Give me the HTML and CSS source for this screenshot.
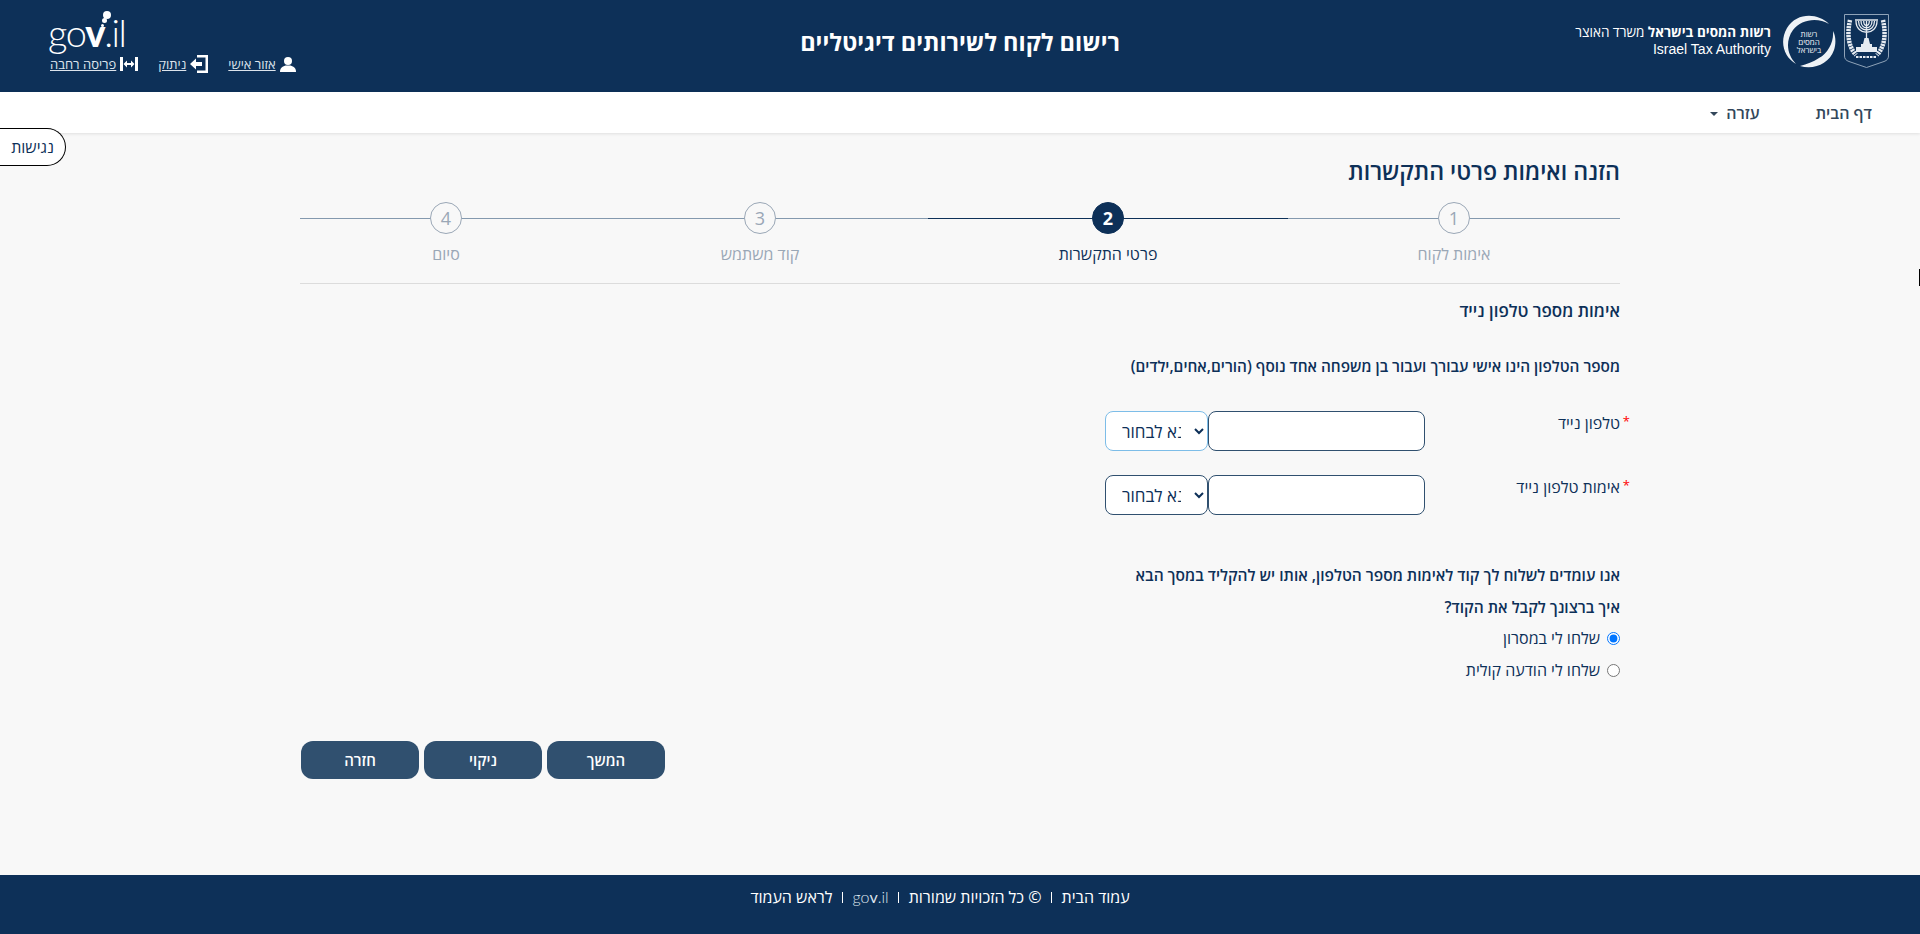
FILE: index.html
```html
<!DOCTYPE html>
<html lang="he" dir="rtl">
<head>
    <meta charset="UTF-8">
    <title>רישום לקוח לשירותים דיגיטליים</title>
    <link rel="stylesheet" href="styles.css">
</head>
<body>
    <!-- Header -->
    <header class="site-header">
        <div class="brand">
            <svg class="emblem" viewBox="0 0 45 54" fill="none" stroke="#e6ebf1">
                <path d="M.5 .5H44.500V42Q44.500 46 40 47.500L22.500 53.500L5 47.500Q.5 46 .5 42Z" stroke="#8fa3b8"/>
                <path d="M6 6C3 20 4 32 12 41" stroke-width="4.500" stroke-dasharray="2.200 .8"/>
                <path d="M39 6C42 20 41 32 33 41" stroke-width="4.500" stroke-dasharray="2.200 .8"/>
                <path d="M22.500 7V25M12 7C12 22 33 22 33 7M14.500 7C14.500 19 30.500 19 30.500 7M17 7C17 16 28 16 28 7M19.700 7C19.700 13 25.300 13 25.300 7" stroke-width="1.300"/>
                <path d="M11 6H34" stroke-width="1.500"/>
                <path d="M20.500 24H24.500L26 30H19Z" fill="#e6ebf1" stroke="none"/>
                <path d="M17 30H28V33H33V38H12V33H17Z" fill="#e6ebf1" stroke="none"/>
                <path d="M12 43H33" stroke-width="2" stroke-dasharray="2.500 1"/>
            </svg>
            <div class="tax-logo">
                <svg viewBox="0 0 54 54" fill="#eef2f6">
                    <path d="M47 10C36 -1 15 -2 5 14C-3 28 2 43 14 50C5 41 3 27 11 16C19 5 36 3 47 10Z"/>
                    <path d="M18 52C32 56 47 50 52 36C54 30 54 22 51 17C52 28 46 39 37 44C31 48 25 50 18 52Z"/>
                </svg>
                <span class="tax-logo-text">רשות<br>המסים<br>בישראל</span>
            </div>
            <div class="brand-text">
                <div><b>רשות המסים בישראל</b> משרד האוצר</div>
                <div class="brand-en" dir="ltr">Israel Tax Authority</div>
            </div>
        </div>
        <h1 class="site-title">רישום לקוח לשירותים דיגיטליים</h1>
        <div class="header-side">
            <div class="gov-logo" dir="ltr">
                <span class="gov-word">go<b>v</b></span><span class="gov-dots"><i></i><i></i><i></i></span><span class="gov-word">.il</span>
            </div>
            <div class="user-links">
                <a href="#">
                    <svg width="16" height="15" viewBox="0 0 16 15" fill="#fff"><circle cx="8" cy="4" r="4"/><path d="M0 15C0 11 2 9.500 5.500 8.500H10.500C14 9.500 16 11 16 15Z"/></svg>
                    <span>אזור אישי</span>
                </a>
                <a href="#">
                    <svg width="18" height="18" viewBox="0 0 18 18" fill="#fff"><path d="M7 0H18V18H7V15.500H15.500V2.500H7Z"/><path d="M0 9L6 3.500V7H12V11H6V14.500Z"/></svg>
                    <span>ניתוק</span>
                </a>
                <a href="#">
                    <svg width="18" height="14" viewBox="0 0 18 14" fill="#fff"><path d="M0 0H3V14H0ZM15 0H18V14H15Z"/><path d="M3.500 7L7 3.500V6H11V3.500L14.500 7L11 10.500V8H7V10.500Z"/></svg>
                    <span>פריסה רחבה</span>
                </a>
            </div>
        </div>
    </header>

    <!-- Menu -->
    <nav class="main-nav">
        <a href="#">דף הבית</a>
        <a href="#" class="has-menu">עזרה</a>
    </nav>

    <button class="access-btn" type="button">נגישות</button>
    <span class="caret-mark"></span>

    <main class="content">
        <h2 class="page-title">הזנה ואימות פרטי התקשרות</h2>

        <!-- Steps -->
        <ol class="steps">
            <li class="step"><span class="step-num">1</span><span class="step-label">אימות לקוח</span></li>
            <li class="step active"><span class="step-num">2</span><span class="step-label">פרטי התקשרות</span></li>
            <li class="step"><span class="step-num">3</span><span class="step-label">קוד משתמש</span></li>
            <li class="step"><span class="step-num">4</span><span class="step-label">סיום</span></li>
        </ol>

        <h3 class="section-title">אימות מספר טלפון נייד</h3>
        <p class="section-note">מספר הטלפון הינו אישי עבורך ועבור בן משפחה אחד נוסף (הורים,אחים,ילדים)</p>

        <div class="form-row">
            <label class="field-label" for="phone">טלפון נייד</label>
            <input class="text-input" type="text" id="phone">
            <select class="prefix focused" dir="ltr"><option>נא לבחור</option></select>
        </div>
        <div class="form-row">
            <label class="field-label" for="phone2">אימות טלפון נייד</label>
            <input class="text-input" type="text" id="phone2">
            <select class="prefix" dir="ltr"><option>נא לבחור</option></select>
        </div>

        <p class="code-note">אנו עומדים לשלוח לך קוד לאימות מספר הטלפון, אותו יש להקליד במסך הבא</p>
        <p class="code-ask">איך ברצונך לקבל את הקוד?</p>
        <label class="radio-row"><input type="radio" name="send" checked> שלחו לי במסרון</label>
        <label class="radio-row"><input type="radio" name="send"> שלחו לי הודעה קולית</label>

        <div class="actions">
            <button class="btn" type="button">המשך</button>
            <button class="btn" type="button">ניקוי</button>
            <button class="btn" type="button">חזרה</button>
        </div>
    </main>

    <footer class="site-footer">
        <a href="#">עמוד הבית</a>
        <a href="#">© כל הזכויות שמורות</a>
        <span class="foot-gov" dir="ltr">go<b>v</b>.il</span>
        <a href="#">לראש העמוד</a>
    </footer>
</body>
</html>
```

FILE: styles.css
```css
/* General Styling */
* {
    box-sizing: border-box;
}

html {
    overflow-x: hidden;
}

body {
    margin: 0;
    min-height: 100vh;
    display: flex;
    flex-direction: column;
    font-family: "Open Sans", "Liberation Sans", sans-serif;
    background: #f8f8f8;
    color: #0d3058;
}

a {
    color: inherit;
}

/* Header */
.site-header {
    height: 92px;
    flex: none;
    background: #0d3058;
    color: #fff;
    display: grid;
    grid-template-columns: 1fr auto 1fr;
    align-items: start;
    padding: 0 31px;
}

.brand {
    display: flex;
    align-items: flex-start;
    padding-top: 14px;
}

.emblem {
    width: 45px;
    height: 54px;
}

.tax-logo {
    width: 54px;
    height: 54px;
    margin-right: 8px;
    position: relative;
}

.tax-logo svg {
    width: 54px;
    height: 54px;
    display: block;
}

.tax-logo-text {
    position: absolute;
    top: 16px;
    left: 0;
    width: 54px;
    text-align: center;
    font-size: 8px;
    line-height: 8px;
    color: #eef2f6;
}

.brand-text {
    margin-right: 11px;
    padding-top: 10px;
    font-size: 13.500px;
    line-height: 17px;
    white-space: nowrap;
}

.brand-en {
    text-align: right;
    font-family: "Liberation Sans", sans-serif;
    font-size: 14px;
}

.site-title {
    margin: 26px 0 0;
    font-size: 23.500px;
    line-height: 32px;
    font-weight: 700;
}

.header-side {
    display: flex;
    flex-direction: column;
    align-items: flex-end;
    padding: 9px 0 0 19px;
}

.gov-logo {
    height: 46px;
    display: flex;
    align-items: flex-end;
    width: 194px;
    margin-left: -2px;
    font-family: "Lato", sans-serif;
    font-weight: 300;
    font-size: 38px;
    line-height: 46px;
    letter-spacing: -1.500px;
    position: relative;
}

.gov-word b {
    font-weight: 900;
}

.gov-dots i {
    position: absolute;
    background: #fff;
    border-radius: 50%;
}

.gov-dots i:nth-child(1) {
    width: 8px;
    height: 8px;
    left: 55px;
    top: 2px;
}

.gov-dots i:nth-child(2) {
    width: 5px;
    height: 5px;
    left: 54px;
    top: 9px;
}

.gov-dots i:nth-child(3) {
    width: 3px;
    height: 3px;
    left: 53px;
    top: 15px;
}

.user-links {
    display: flex;
    gap: 20px;
    font-size: 13px;
    line-height: 18px;
}

.user-links a {
    display: flex;
    align-items: center;
    gap: 4px;
    text-decoration: none;
}

.user-links span {
    text-decoration: underline;
    color: #dde4ec;
}

/* Menu */
.main-nav {
    height: 41px;
    flex: none;
    background: #fff;
    display: flex;
    align-items: center;
    padding-right: 48px;
    gap: 56px;
    font-size: 16px;
    font-weight: 600;
    color: #33475b;
    box-shadow: 0 1px 3px rgba(0, 0, 0, 0.1);
}

.main-nav a {
    text-decoration: none;
}

.has-menu::after {
    content: "";
    display: inline-block;
    margin-right: 8px;
    vertical-align: 3px;
    border-top: 4px solid #33475b;
    border-left: 4px solid transparent;
    border-right: 4px solid transparent;
}

.access-btn {
    position: absolute;
    top: 128px;
    left: 0;
    width: 66px;
    height: 38px;
    background: #fff;
    border: 1px solid #000;
    border-left: none;
    border-radius: 0 19px 19px 0;
    font-family: inherit;
    font-size: 16px;
    color: #0d3058;
    padding: 0;
}

/* stray text caret at the window edge */
.caret-mark {
    position: absolute;
    top: 269px;
    left: 1919px;
    width: 1px;
    height: 17px;
    background: #000;
}

/* Content */
.content {
    flex: 1;
    width: 1320px;
    margin: 0 auto;
}

.page-title {
    margin: 23px 0 0;
    font-size: 23.200px;
    line-height: 30px;
    font-weight: 600;
}

.steps {
    list-style: none;
    margin: 16px 0 0;
    padding: 0 0 19px;
    display: grid;
    grid-template-columns: 332px 360px 336px 292px;
    border-bottom: 1px solid #dcdcdc;
}

.step {
    position: relative;
    display: flex;
    flex-direction: column;
    align-items: center;
    color: #9aa7b6;
}

/* connecting line behind the number */
.step::before {
    content: "";
    position: absolute;
    top: 16px;
    left: 0;
    right: 0;
    height: 1px;
    background: #8499ae;
}

.step-num {
    position: relative;
    width: 32px;
    height: 32px;
    border: 1px solid #9aa7b6;
    border-radius: 50%;
    background: #f8f8f8;
    display: flex;
    align-items: center;
    justify-content: center;
    font-size: 18px;
}

.step-label {
    margin-top: 10px;
    font-size: 16px;
    line-height: 20px;
}

.step.active {
    color: #0d3058;
}

.step.active::before {
    background: #0d3058;
}

.step.active .step-num {
    background: #0d3058;
    border-color: #0d3058;
    color: #fff;
    font-weight: 700;
}

.section-title {
    margin: 15px 0 0;
    font-size: 17px;
    line-height: 24px;
    font-weight: 600;
}

.section-note {
    margin: 32px 0 0;
    font-size: 15.350px;
    line-height: 22px;
    font-weight: 600;
}

.form-row {
    display: flex;
    height: 40px;
    margin-top: 24px;
    align-items: flex-start;
}

.section-note + .form-row {
    margin-top: 34px;
}

.field-label {
    width: 195px;
    font-size: 16px;
    line-height: 24px;
}

.field-label::before {
    content: "*";
    color: #f00;
    position: absolute;
    font-size: 13px;
    transform: translate(10px, -2px);
}

.text-input {
    width: 217px;
    height: 40px;
    background: #fff;
    border: 1px solid #30506f;
    border-radius: 8px;
    outline: none;
}

.prefix {
    width: 103px;
    height: 40px;
    padding: 0 10px 0 12px;
    background: #fff;
    border: 1px solid #30506f;
    border-radius: 8px;
    font-family: inherit;
    font-size: 17px;
    color: #0d3058;
}

.prefix.focused {
    border-color: #7dbde8;
}

.code-note {
    margin: 49px 0 0;
    font-size: 15.500px;
    line-height: 22px;
    font-weight: 600;
}

.code-ask {
    margin: 10px 0 0;
    font-size: 15.500px;
    line-height: 22px;
    font-weight: 600;
}

.radio-row {
    display: flex;
    align-items: center;
    height: 32px;
    font-size: 16px;
}

.radio-row input {
    margin: 0 0 0 7px;
}

.code-ask + .radio-row {
    margin-top: 4px;
}

.actions {
    display: flex;
    justify-content: flex-end;
    gap: 5px;
    margin-top: 55px;
    padding-left: 1px;
}

.btn {
    width: 118px;
    height: 38px;
    background: #30506f;
    border: none;
    border-radius: 12px;
    font-family: inherit;
    font-size: 15px;
    font-weight: 600;
    color: #fff;
}

/* Footer */
.site-footer {
    height: 59px;
    flex: none;
    background: #0d3058;
    color: #fff;
    display: flex;
    justify-content: center;
    align-items: flex-start;
    padding: 12px 40px 0 0;
    font-size: 16px;
    line-height: 20px;
}

.site-footer a {
    text-decoration: none;
}

.site-footer > * {
    padding: 0 10px;
    position: relative;
}

.site-footer > * + *::before {
    content: "";
    position: absolute;
    right: 0;
    top: 5px;
    width: 1px;
    height: 11px;
    background: #fff;
}

.foot-gov {
    font-family: "Lato", sans-serif;
    font-weight: 300;
    font-size: 16px;
    color: #dde4ec;
}
```
